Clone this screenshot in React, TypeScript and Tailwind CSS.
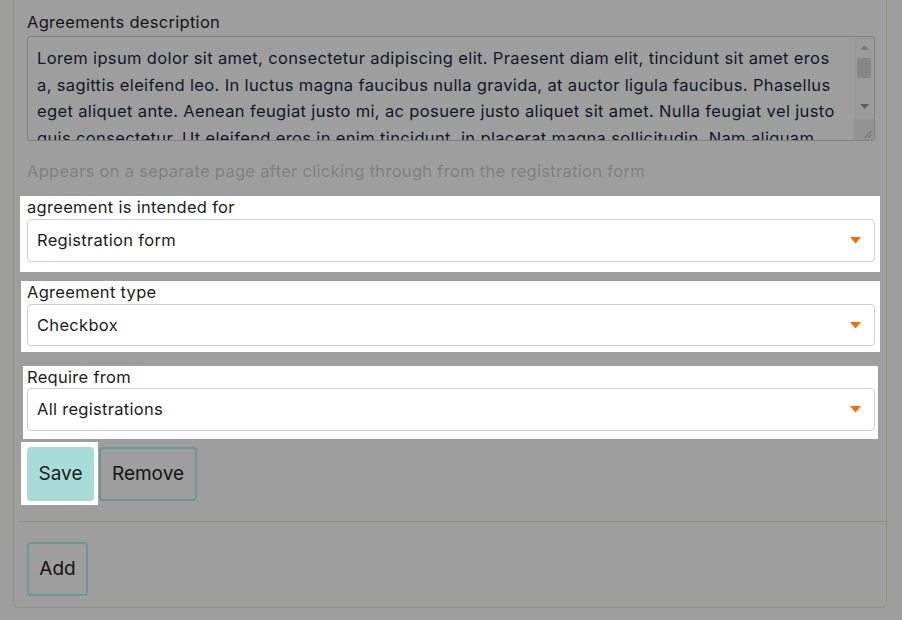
import React from "react";

function Caret() {
  return (
    <svg width="11" height="7" viewBox="0 0 11 7" className="shrink-0">
      <polygon points="0,0 11,0 5.5,6.5" fill="#ff6a00" />
    </svg>
  );
}

const lines = [
  "Lorem ipsum dolor sit amet, consectetur adipiscing elit. Praesent diam elit, tincidunt sit amet eros",
  "a, sagittis eleifend leo. In luctus magna faucibus nulla gravida, at auctor ligula faucibus. Phasellus",
  "eget aliquet ante. Aenean feugiat justo mi, ac posuere justo aliquet sit amet. Nulla feugiat vel justo",
  "quis consectetur. Ut eleifend eros in enim tincidunt, in placerat magna sollicitudin. Nam aliquam",
];

export default function App() {
  return (
    <div className="w-[902px] h-[620px] overflow-hidden bg-[#9e9e9e] font-[Inter,sans-serif] text-[16.5px] tracking-[0.3px]">
      <div className="ml-[13px] w-[874px] border-x border-b border-[#8e9386] rounded-b-[6px] pl-[13px] pr-[11px] pt-[10px] pb-[11px]">
        <div className="leading-[24px] text-[#151515]">Agreements description</div>
        <div className="mt-[2px] h-[105px] border border-[#808080] rounded-[3px] flex overflow-hidden">
          <div className="flex-1 pl-[9px] pt-[8px] text-[16.5px] tracking-[0.36px] leading-[26.5px] text-[#10172a] overflow-hidden">
            {lines.map((l, i) => (
              <div key={i} className="whitespace-nowrap">{l}</div>
            ))}
          </div>
          <div className="w-[20px] flex flex-col bg-[#9b9b9b]">
            <div className="h-[17px] flex items-center justify-center pt-[4px]">
              <svg width="9" height="5" viewBox="0 0 9 5"><polygon points="4.5,0 9,5 0,5" fill="#7d7d7d" /></svg>
            </div>
            <div className="mx-[3px] mt-[4px] h-[20px] bg-[#868686]" />
            <div className="flex-1" />
            <div className="h-[17px] flex items-center justify-center">
              <svg width="9" height="5" viewBox="0 0 9 5"><polygon points="0,0 9,0 4.5,5" fill="#5e5e5e" /></svg>
            </div>
            <div className="h-[21px] mt-[4px] bg-[#939393] flex items-end justify-end p-[2px]">
              <svg width="8" height="8" viewBox="0 0 8 8">
                <line x1="7.5" y1="1" x2="1" y2="7.5" stroke="#5e5e5e" strokeWidth="1" />
                <line x1="7.5" y1="4.5" x2="4.5" y2="7.5" stroke="#5e5e5e" strokeWidth="1" />
              </svg>
            </div>
          </div>
        </div>
        <div className="mt-[18px] leading-[24px] text-[#808080]">
          Appears on a separate page after clicking through from the registration form
        </div>

        <div className="mt-[13px] bg-white ml-[-7px] mr-[-5px] pl-[7px] pr-[5px] pb-[10px]">
          <div className="leading-[23px] text-[#1c1c1c]">agreement is intended for</div>
          <div className="h-[43px] border border-[#cfcfcf] rounded-[4px] flex items-center justify-between pl-[9px] pr-[13px] text-[#1c1c1c]">
            <span>Registration form</span>
            <Caret />
          </div>
        </div>

        <div className="mt-[9px] bg-white ml-[-6px] mr-[-5px] pl-[6px] pr-[5px] pb-[6px]">
          <div className="leading-[23px] text-[#1c1c1c]">Agreement type</div>
          <div className="h-[42px] border border-[#cfcfcf] rounded-[4px] flex items-center justify-between pl-[9px] pr-[13px] text-[#1c1c1c]">
            <span>Checkbox</span>
            <Caret />
          </div>
        </div>

        <div className="mt-[14px] bg-white ml-[-4px] mr-[-3px] pl-[4px] pr-[3px] pb-[8px]">
          <div className="leading-[22px] text-[#1c1c1c]">Require from</div>
          <div className="h-[43px] border border-[#cfcfcf] rounded-[4px] flex items-center justify-between pl-[9px] pr-[13px] text-[#1c1c1c]">
            <span>All registrations</span>
            <Caret />
          </div>
        </div>

        <div className="mt-[3px] flex items-start">
          <div className="bg-white ml-[-6px] pl-[6px] pr-[4px] pt-[5px] pb-[4px]">
            <button className="w-[67px] h-[54px] rounded-[4px] bg-[#a8dcd9] text-[19px] tracking-normal text-[#1c1c1c] flex items-center justify-center">
              Save
            </button>
          </div>
          <button className="ml-[1px] mt-[5px] w-[98px] h-[54px] rounded-[4px] border-2 border-[#6c9794] text-[19px] tracking-normal text-[#141414] flex items-center justify-center">
            Remove
          </button>
        </div>

        <div className="mt-[16px] h-px bg-[#8e9386] ml-[-10px] mr-[-10px]" />

        <button className="mt-[20px] w-[61px] h-[54px] rounded-[4px] border-2 border-[#6c9794] text-[19px] tracking-normal text-[#141414] flex items-center justify-center">
          Add
        </button>
      </div>
    </div>
  );
}
